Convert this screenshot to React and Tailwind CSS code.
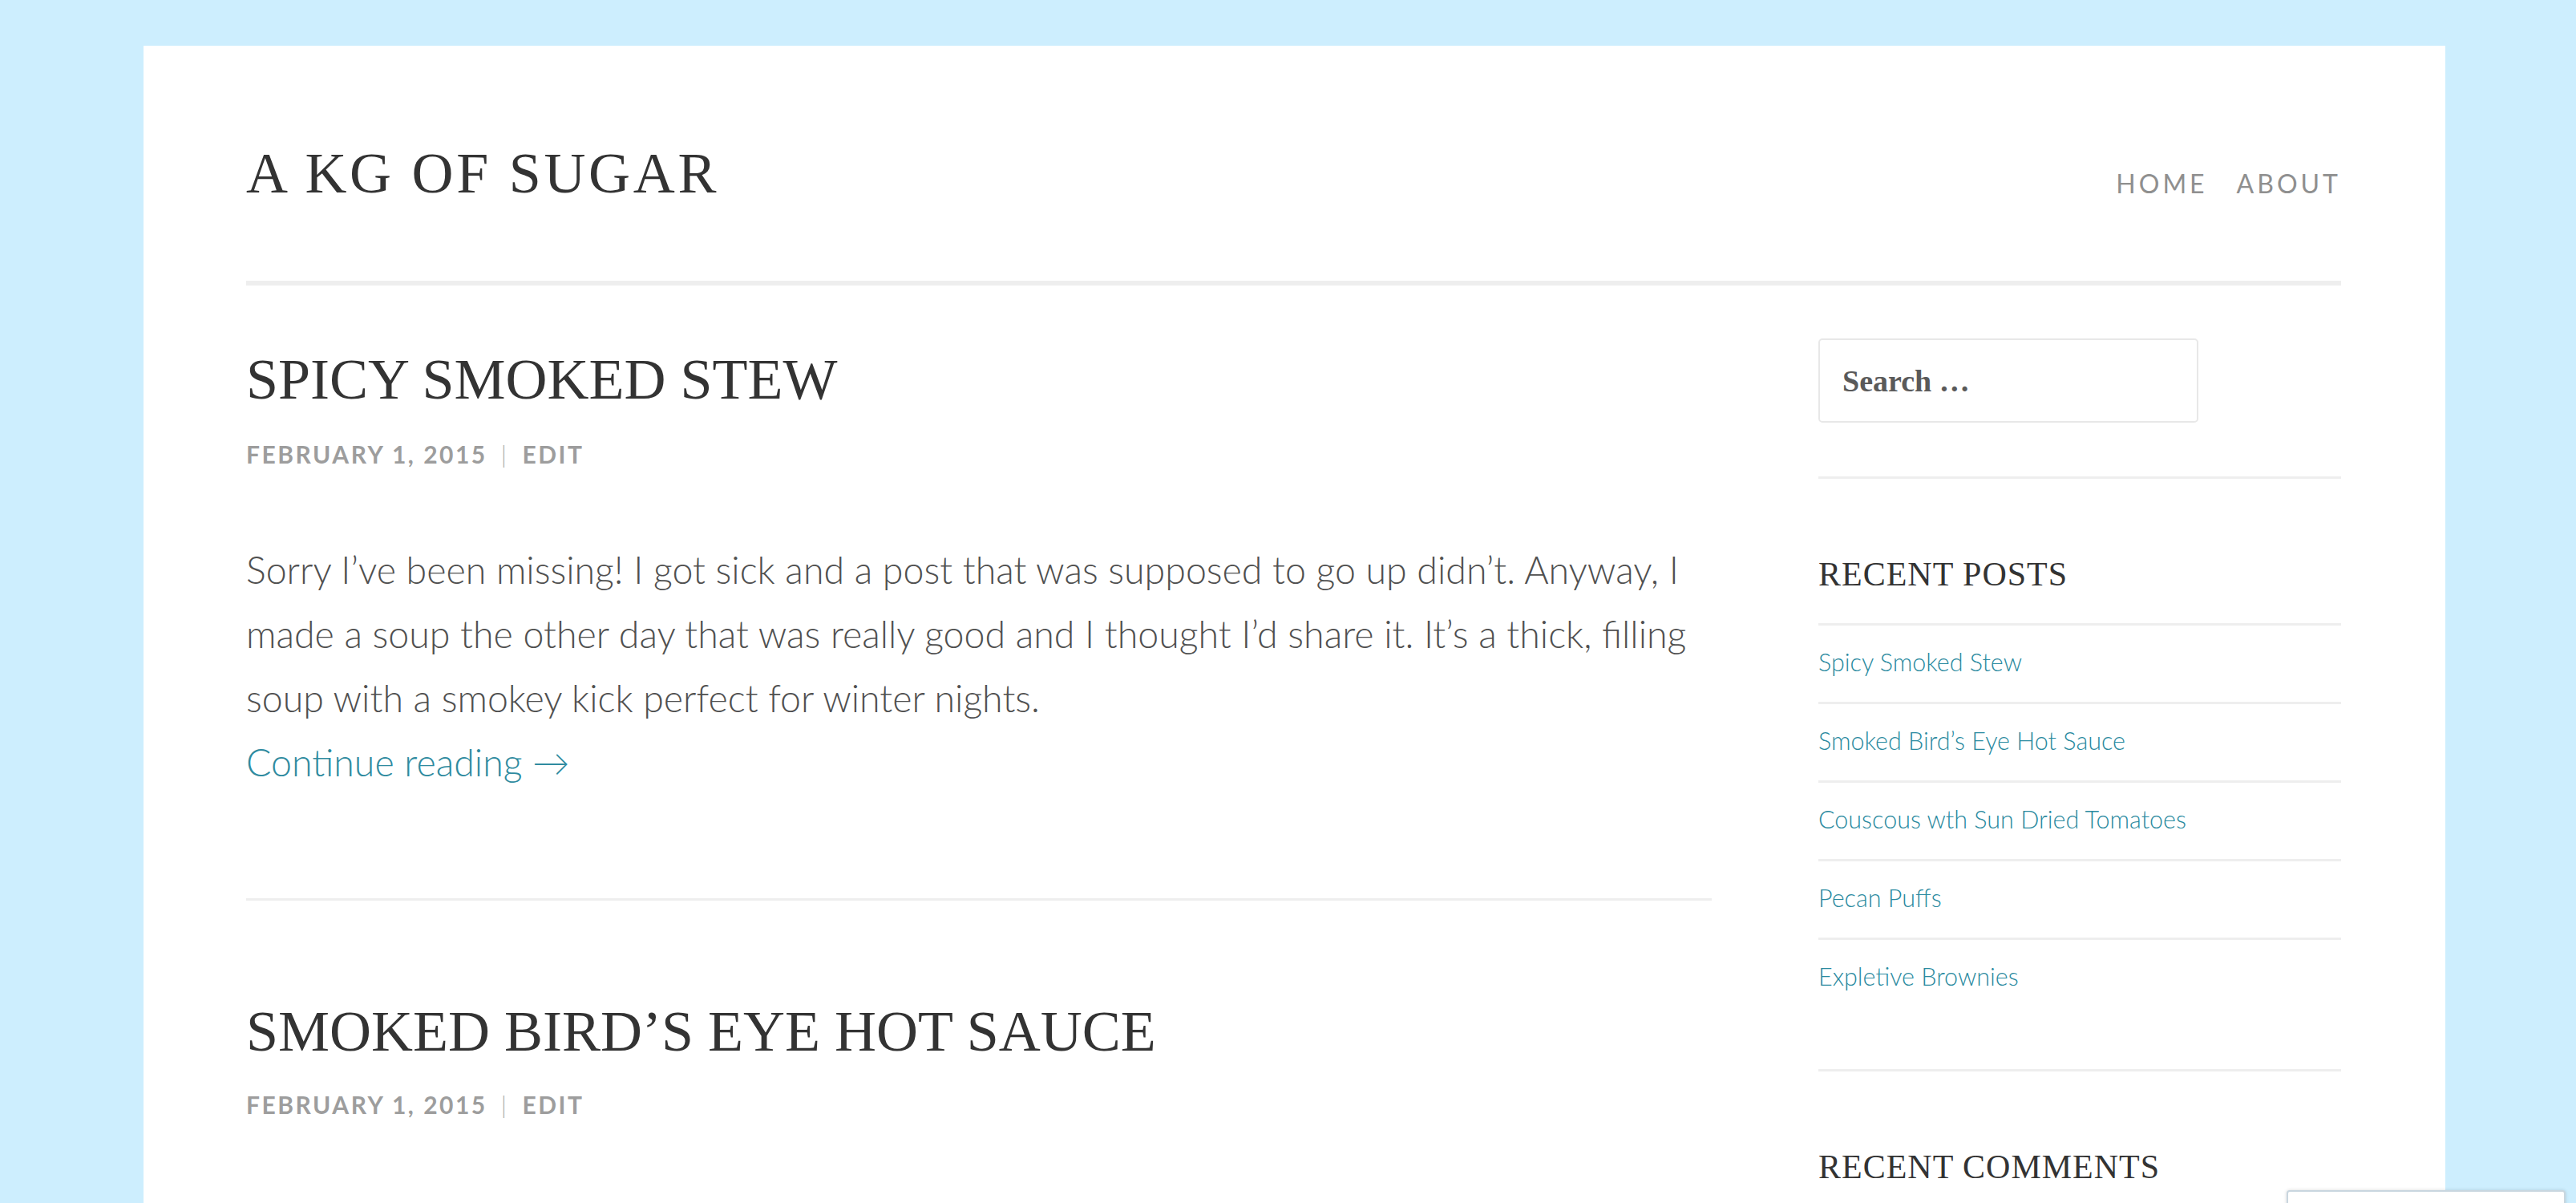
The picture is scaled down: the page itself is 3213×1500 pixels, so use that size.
import React from "react";

const serif = "font-['Liberation_Serif','Times_New_Roman',serif]";
const lato = "font-['Lato','Liberation_Sans',sans-serif]";

function Meta() {
  return (
    <div className={`${lato} text-[30px] leading-[30px] font-bold uppercase tracking-[2.5px] text-[#9d9d9d] flex items-center`}>
      <span>February 1, 2015</span>
      <span className="mx-[17px] font-light text-[#aaaaaa]">|</span>
      <span>Edit</span>
    </div>
  );
}

const recent = [
  "Spicy Smoked Stew",
  "Smoked Bird’s Eye Hot Sauce",
  "Couscous wth Sun Dried Tomatoes",
  "Pecan Puffs",
  "Expletive Brownies",
];

export default function App() {
  return (
    <div className="min-h-screen bg-[#cdeefe] pt-[57px] pl-[179px] overflow-hidden">
      <div className="w-[2871px] min-h-[1600px] bg-white pl-[128px] pr-[130px]">
        {/* header */}
        <header className="h-[293px] flex items-start justify-between">
          <h1 className={`${serif} mt-[123px] text-[72px] leading-[72px] tracking-[3.7px] uppercase text-[#333]`}>
            A KG of Sugar
          </h1>
          <nav className={`${lato} mt-[156px] text-[32px] leading-[32px] uppercase tracking-[4px] text-[#8f8f8f] flex gap-[36px]`}>
            <a>Home</a>
            <a>About</a>
          </nav>
        </header>
        <div className="h-[6px] bg-[#eeeeee]" />

        <div className="flex">
          {/* main column */}
          <main className="w-[1828px]">
            <article>
              <h2 className={`${serif} mt-[81px] text-[72px] leading-[72px] uppercase text-[#333]`}>
                Spicy Smoked Stew
              </h2>
              <div className="mt-[42px]">
                <Meta />
              </div>
              <div className={`${lato} mt-[89px] text-[46.5px] leading-[80px] font-light text-[#505050]`}>
                <p>
                  Sorry I’ve been missing! I got sick and a post that was supposed to go up didn’t. Anyway, I made a soup the other day that was really good and I thought I’d share it. It’s a thick, filling soup with a smokey kick perfect for winter nights.
                </p>
                <p>
                  <a className="text-[#2f8ba0]">Continue reading →</a>
                </p>
              </div>
            </article>
            <div className="mt-[130px] h-[3px] bg-[#eeeeee]" />
            <article>
              <h2 className={`${serif} mt-[127px] text-[72px] leading-[72px] uppercase text-[#333]`}>
                Smoked Bird’s Eye Hot Sauce
              </h2>
              <div className="mt-[40px]">
                <Meta />
              </div>
            </article>
          </main>

          {/* sidebar */}
          <aside className="w-[652px] ml-auto">
            <div className="mt-[66px] pb-[67px] border-b-[3px] border-[#eeeeee]">
              <div className="w-[474px] h-[105px] border-2 border-[#e8e8e8] rounded-[5px] flex items-center pl-[28px]">
                <span className={`${serif} text-[38px] leading-[38px] font-bold text-[#5a5a5a]`}>Search …</span>
              </div>
            </div>

            <div className="pb-[66px] border-b-[3px] border-[#eeeeee]">
              <h3 className={`${serif} mt-[98px] text-[42px] leading-[42px] uppercase tracking-[1px] text-[#333]`}>
                Recent Posts
              </h3>
              <ul className="mt-[40px]">
                {recent.map((t) => (
                  <li key={t} className="h-[98px] border-t-[3px] border-[#eeeeee] flex items-center pb-[5px]">
                    <a className={`${lato} text-[30.5px] leading-[31px] font-light text-[#2a8aa0]`}>{t}</a>
                  </li>
                ))}
              </ul>
            </div>

            <h3 className={`${serif} mt-[98px] text-[42px] leading-[42px] uppercase tracking-[1px] text-[#333]`}>
              Recent Comments
            </h3>
          </aside>
        </div>
      </div>

      {/* floating box bottom-right */}
      <div className="fixed left-[2852px] top-[1484px] w-[348px] h-[60px] bg-white border-2 border-[#c9d6df] rounded-t-[4px] shadow-[0_0_4px_rgba(0,0,0,0.15)]" />
    </div>
  );
}
